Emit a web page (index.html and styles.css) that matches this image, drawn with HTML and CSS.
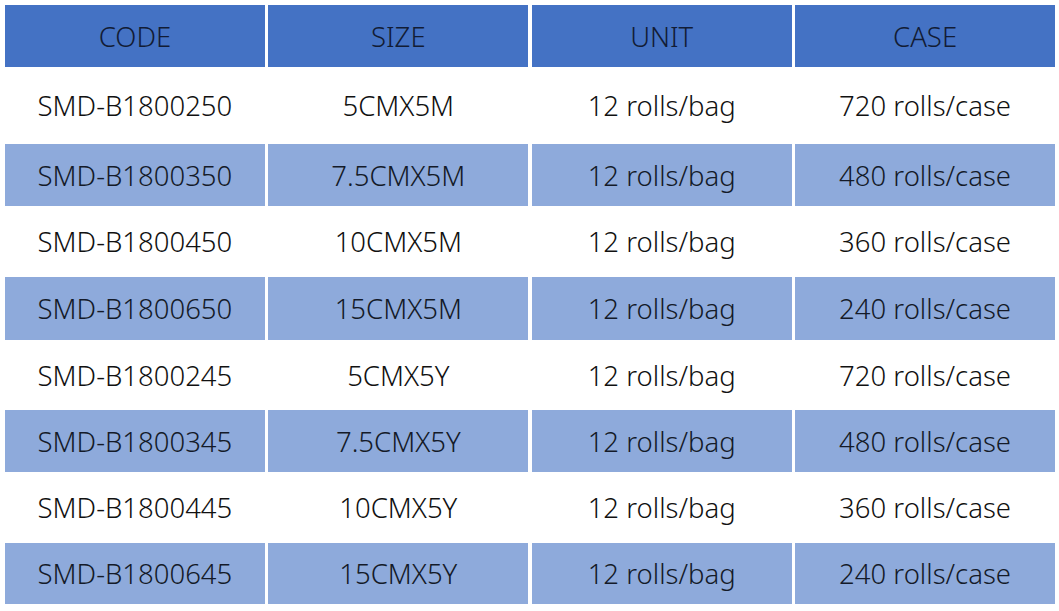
FILE: index.html
```html
<!DOCTYPE html>
<html>
<head>
<meta charset="utf-8">
<link rel="stylesheet" href="styles.css">
</head>
<body>
<div class="table">
  <div class="cell head">CODE</div><div class="cell head">SIZE</div><div class="cell head">UNIT</div><div class="cell head">CASE</div>
  <div class="cell">SMD-B1800250</div><div class="cell">5CMX5M</div><div class="cell">12 rolls/bag</div><div class="cell">720 rolls/case</div>
  <div class="cell alt">SMD-B1800350</div><div class="cell alt">7.5CMX5M</div><div class="cell alt">12 rolls/bag</div><div class="cell alt">480 rolls/case</div>
  <div class="cell">SMD-B1800450</div><div class="cell">10CMX5M</div><div class="cell">12 rolls/bag</div><div class="cell">360 rolls/case</div>
  <div class="cell alt">SMD-B1800650</div><div class="cell alt">15CMX5M</div><div class="cell alt">12 rolls/bag</div><div class="cell alt">240 rolls/case</div>
  <div class="cell">SMD-B1800245</div><div class="cell">5CMX5Y</div><div class="cell">12 rolls/bag</div><div class="cell">720 rolls/case</div>
  <div class="cell alt">SMD-B1800345</div><div class="cell alt">7.5CMX5Y</div><div class="cell alt">12 rolls/bag</div><div class="cell alt">480 rolls/case</div>
  <div class="cell">SMD-B1800445</div><div class="cell">10CMX5Y</div><div class="cell">12 rolls/bag</div><div class="cell">360 rolls/case</div>
  <div class="cell alt">SMD-B1800645</div><div class="cell alt">15CMX5Y</div><div class="cell alt">12 rolls/bag</div><div class="cell alt">240 rolls/case</div>
</div>
</body>
</html>
```
FILE: styles.css
```css
html, body {
  margin: 0;
  padding: 0;
  background: #ffffff;
}
body {
  padding: 5px 0 0 5px;
  font-family: "Noto Sans", "Open Sans", sans-serif;
  font-weight: 300;
}
.table {
  width: 1050px;
  display: grid;
  grid-template-columns: repeat(4, 1fr);
  grid-template-rows: 62px 77px 62px 71px 63px 70px 62px 71px 61px;
  column-gap: 3.5px;
}
.cell {
  display: flex;
  align-items: center;
  justify-content: center;
  font-size: 27.5px;
  color: #111111;
  white-space: nowrap;
}
.head {
  background: #4472c4;
  color: #121c35;
}
.alt {
  background: #8eaadb;
  color: #141a28;
}
```
